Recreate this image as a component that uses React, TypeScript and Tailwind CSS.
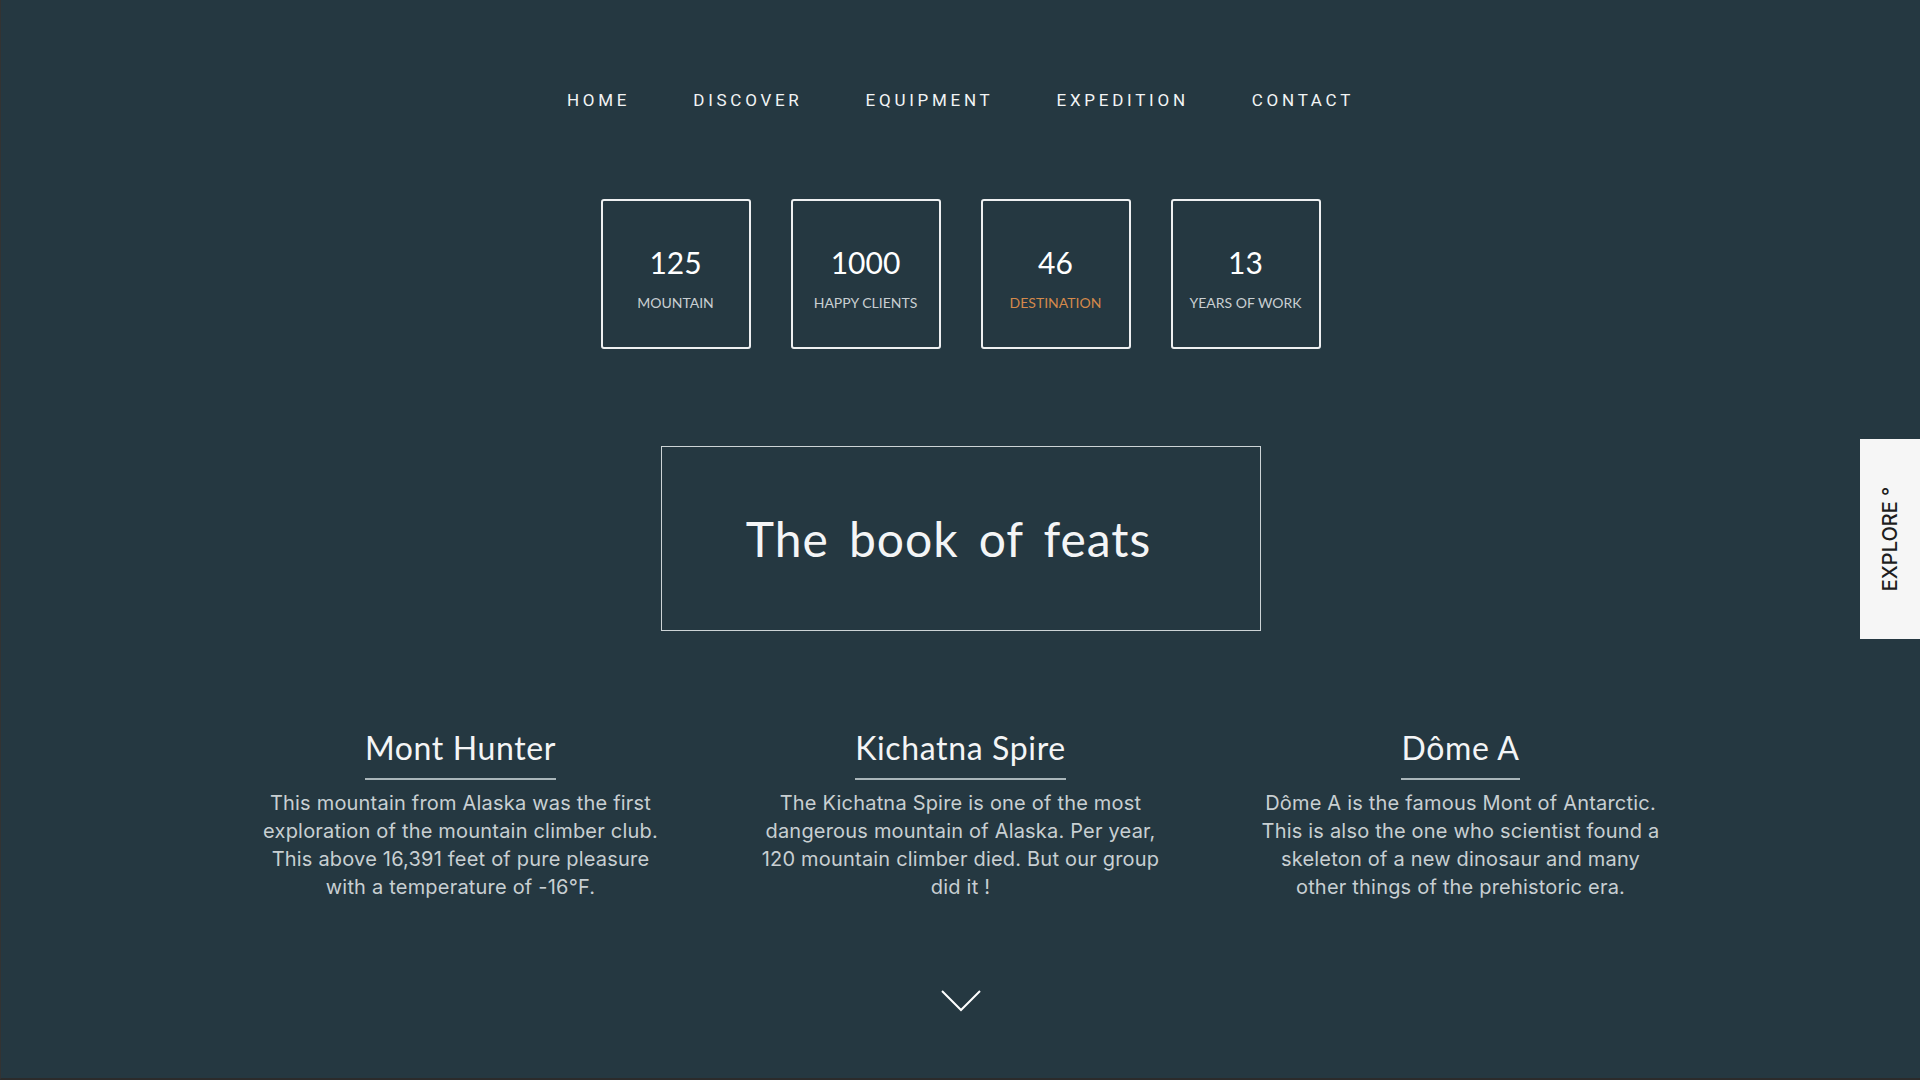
const navItems = ["HOME", "DISCOVER", "EQUIPMENT", "EXPEDITION", "CONTACT"];

const stats = [
  { value: "125", label: "MOUNTAIN", accent: false },
  { value: "1000", label: "HAPPY CLIENTS", accent: false },
  { value: "46", label: "DESTINATION", accent: true },
  { value: "13", label: "YEARS OF WORK", accent: false },
];

const feats = [
  {
    title: "Mont Hunter",
    text: "This mountain from Alaska was the first exploration of the mountain climber club. This above 16,391 feet of pure pleasure with a temperature of -16°F.",
  },
  {
    title: "Kichatna Spire",
    text: "The Kichatna Spire is one of the most dangerous mountain of Alaska. Per year, 120 mountain climber died. But our group did it !",
  },
  {
    title: "Dôme A",
    text: "Dôme A is the famous Mont of Antarctic. This is also the one who scientist found a skeleton of a new dinosaur and many other things of the prehistoric era.",
  },
];

export default function App() {
  return (
    <div className="relative flex h-[1080px] w-full flex-col items-center overflow-hidden border-b-2 border-l border-b-[#2b2b2b] border-l-[#333333] bg-[#253841] font-['Lato',sans-serif] text-white">
      {/* nav */}
      <nav className="flex gap-[63px] pt-[89px] font-['Roboto',sans-serif] text-[17px] leading-[22px] tracking-[0.22em] text-[#f2f4f5]">
        {navItems.map((item) => (
          <a key={item} href="#" className="block">
            {item}
          </a>
        ))}
      </nav>

      {/* stats */}
      <div className="mt-[88px] flex gap-[40px]">
        {stats.map((s) => (
          <div
            key={s.label}
            className="flex h-[150px] w-[150px] flex-col items-center justify-center rounded-[3px] border-2 border-[#eef0f1] pt-[7px]"
          >
            <p className="text-[30px] leading-[36px] text-white">{s.value}</p>
            <p
              className={
                s.accent
                  ? "mt-[15px] text-[14px] leading-4 text-[#d4894b]"
                  : "mt-[15px] text-[14px] leading-4 text-[#c9cfd2]"
              }
            >
              {s.label}
            </p>
          </div>
        ))}
      </div>

      {/* title */}
      <div className="mt-[97px] flex h-[185px] w-[600px] items-center justify-center border border-[#cdd4d6] pr-6">
        <h1 className="text-[48px] leading-none tracking-[0.02em] text-[#f4f5f6] [word-spacing:7px]">
          The book of feats
        </h1>
      </div>

      {/* feats */}
      <div className="mt-[97px] grid grid-cols-3 gap-[100px]">
        {feats.map((f) => (
          <div key={f.title} className="flex w-[400px] flex-col items-center">
            <h2 className="border-b-2 border-[#aab6ba] pb-[10px] text-[32px] leading-[40px] tracking-[0.02em] text-[#f4f5f6]">
              {f.title}
            </h2>
            <p className="mt-[9px] text-center font-['Inter',sans-serif] text-[20px] leading-[28px] tracking-[0.01em] text-[#c8cfd2]">
              {f.text}
            </p>
          </div>
        ))}
      </div>

      {/* scroll chevron */}
      <div className="mt-auto pb-[66px]">
        <svg width="40" height="22" viewBox="0 0 40 22" fill="none">
          <polyline points="1,1 20,20 39,1" stroke="#ffffff" strokeWidth="2" />
        </svg>
      </div>

      {/* explore tab */}
      <div className="absolute right-0 top-[439px] flex h-[200px] w-[60px] items-center justify-center bg-[#f6f6f6]">
        <span className="-rotate-90 whitespace-nowrap font-['Inter',sans-serif] text-[20px] font-medium text-[#1e1e1e]">
          EXPLORE °
        </span>
      </div>
    </div>
  );
}
